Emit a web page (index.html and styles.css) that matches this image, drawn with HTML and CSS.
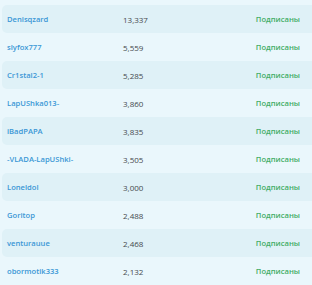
FILE: index.html
```html
<!DOCTYPE html>
<html lang="ru">
<head>
<meta charset="utf-8">
<link rel="stylesheet" href="styles.css">
</head>
<body>
<div class="list">
  <div class="row shaded"><span class="name">Denisqzard</span><span class="num">13,337</span><span class="status">Подписаны</span></div>
  <div class="row"><span class="name">slyfox777</span><span class="num">5,559</span><span class="status">Подписаны</span></div>
  <div class="row shaded"><span class="name">Cr1stal2-1</span><span class="num">5,285</span><span class="status">Подписаны</span></div>
  <div class="row"><span class="name">LapUShka013-</span><span class="num">3,860</span><span class="status">Подписаны</span></div>
  <div class="row shaded"><span class="name">iBadPAPA</span><span class="num">3,835</span><span class="status">Подписаны</span></div>
  <div class="row"><span class="name">-VLADA-LapUShki-</span><span class="num">3,505</span><span class="status">Подписаны</span></div>
  <div class="row shaded"><span class="name">Loneldol</span><span class="num">3,000</span><span class="status">Подписаны</span></div>
  <div class="row"><span class="name">Goritop</span><span class="num">2,488</span><span class="status">Подписаны</span></div>
  <div class="row shaded"><span class="name">venturauue</span><span class="num">2,468</span><span class="status">Подписаны</span></div>
  <div class="row"><span class="name">obormotik333</span><span class="num">2,132</span><span class="status">Подписаны</span></div>
</div>
</body>
</html>
```
FILE: styles.css
```css
html, body {
  margin: 0;
  padding: 0;
  background: #eaf7fc;
}
body {
  font-family: "Open Sans", "Noto Sans", sans-serif;
  font-size: 8px;
}
.list {
  padding: 5px 0 0 2px;
  display: flex;
  flex-direction: column;
}
.row {
  height: 28px;
  display: grid;
  grid-template-columns: 116px 1fr auto;
  align-items: center;
  padding: 0 12px 0 5px;
  border-radius: 5px 0 0 5px;
}
.row.shaded {
  background: #dff1f7;
}
.name {
  color: #3b97d6;
  font-size: 7.6px;
  font-weight: 600;
}
.num {
  color: #454a4e;
}
.status {
  color: #42ad66;
  font-size: 7.6px;
  font-weight: 600;
}
```
